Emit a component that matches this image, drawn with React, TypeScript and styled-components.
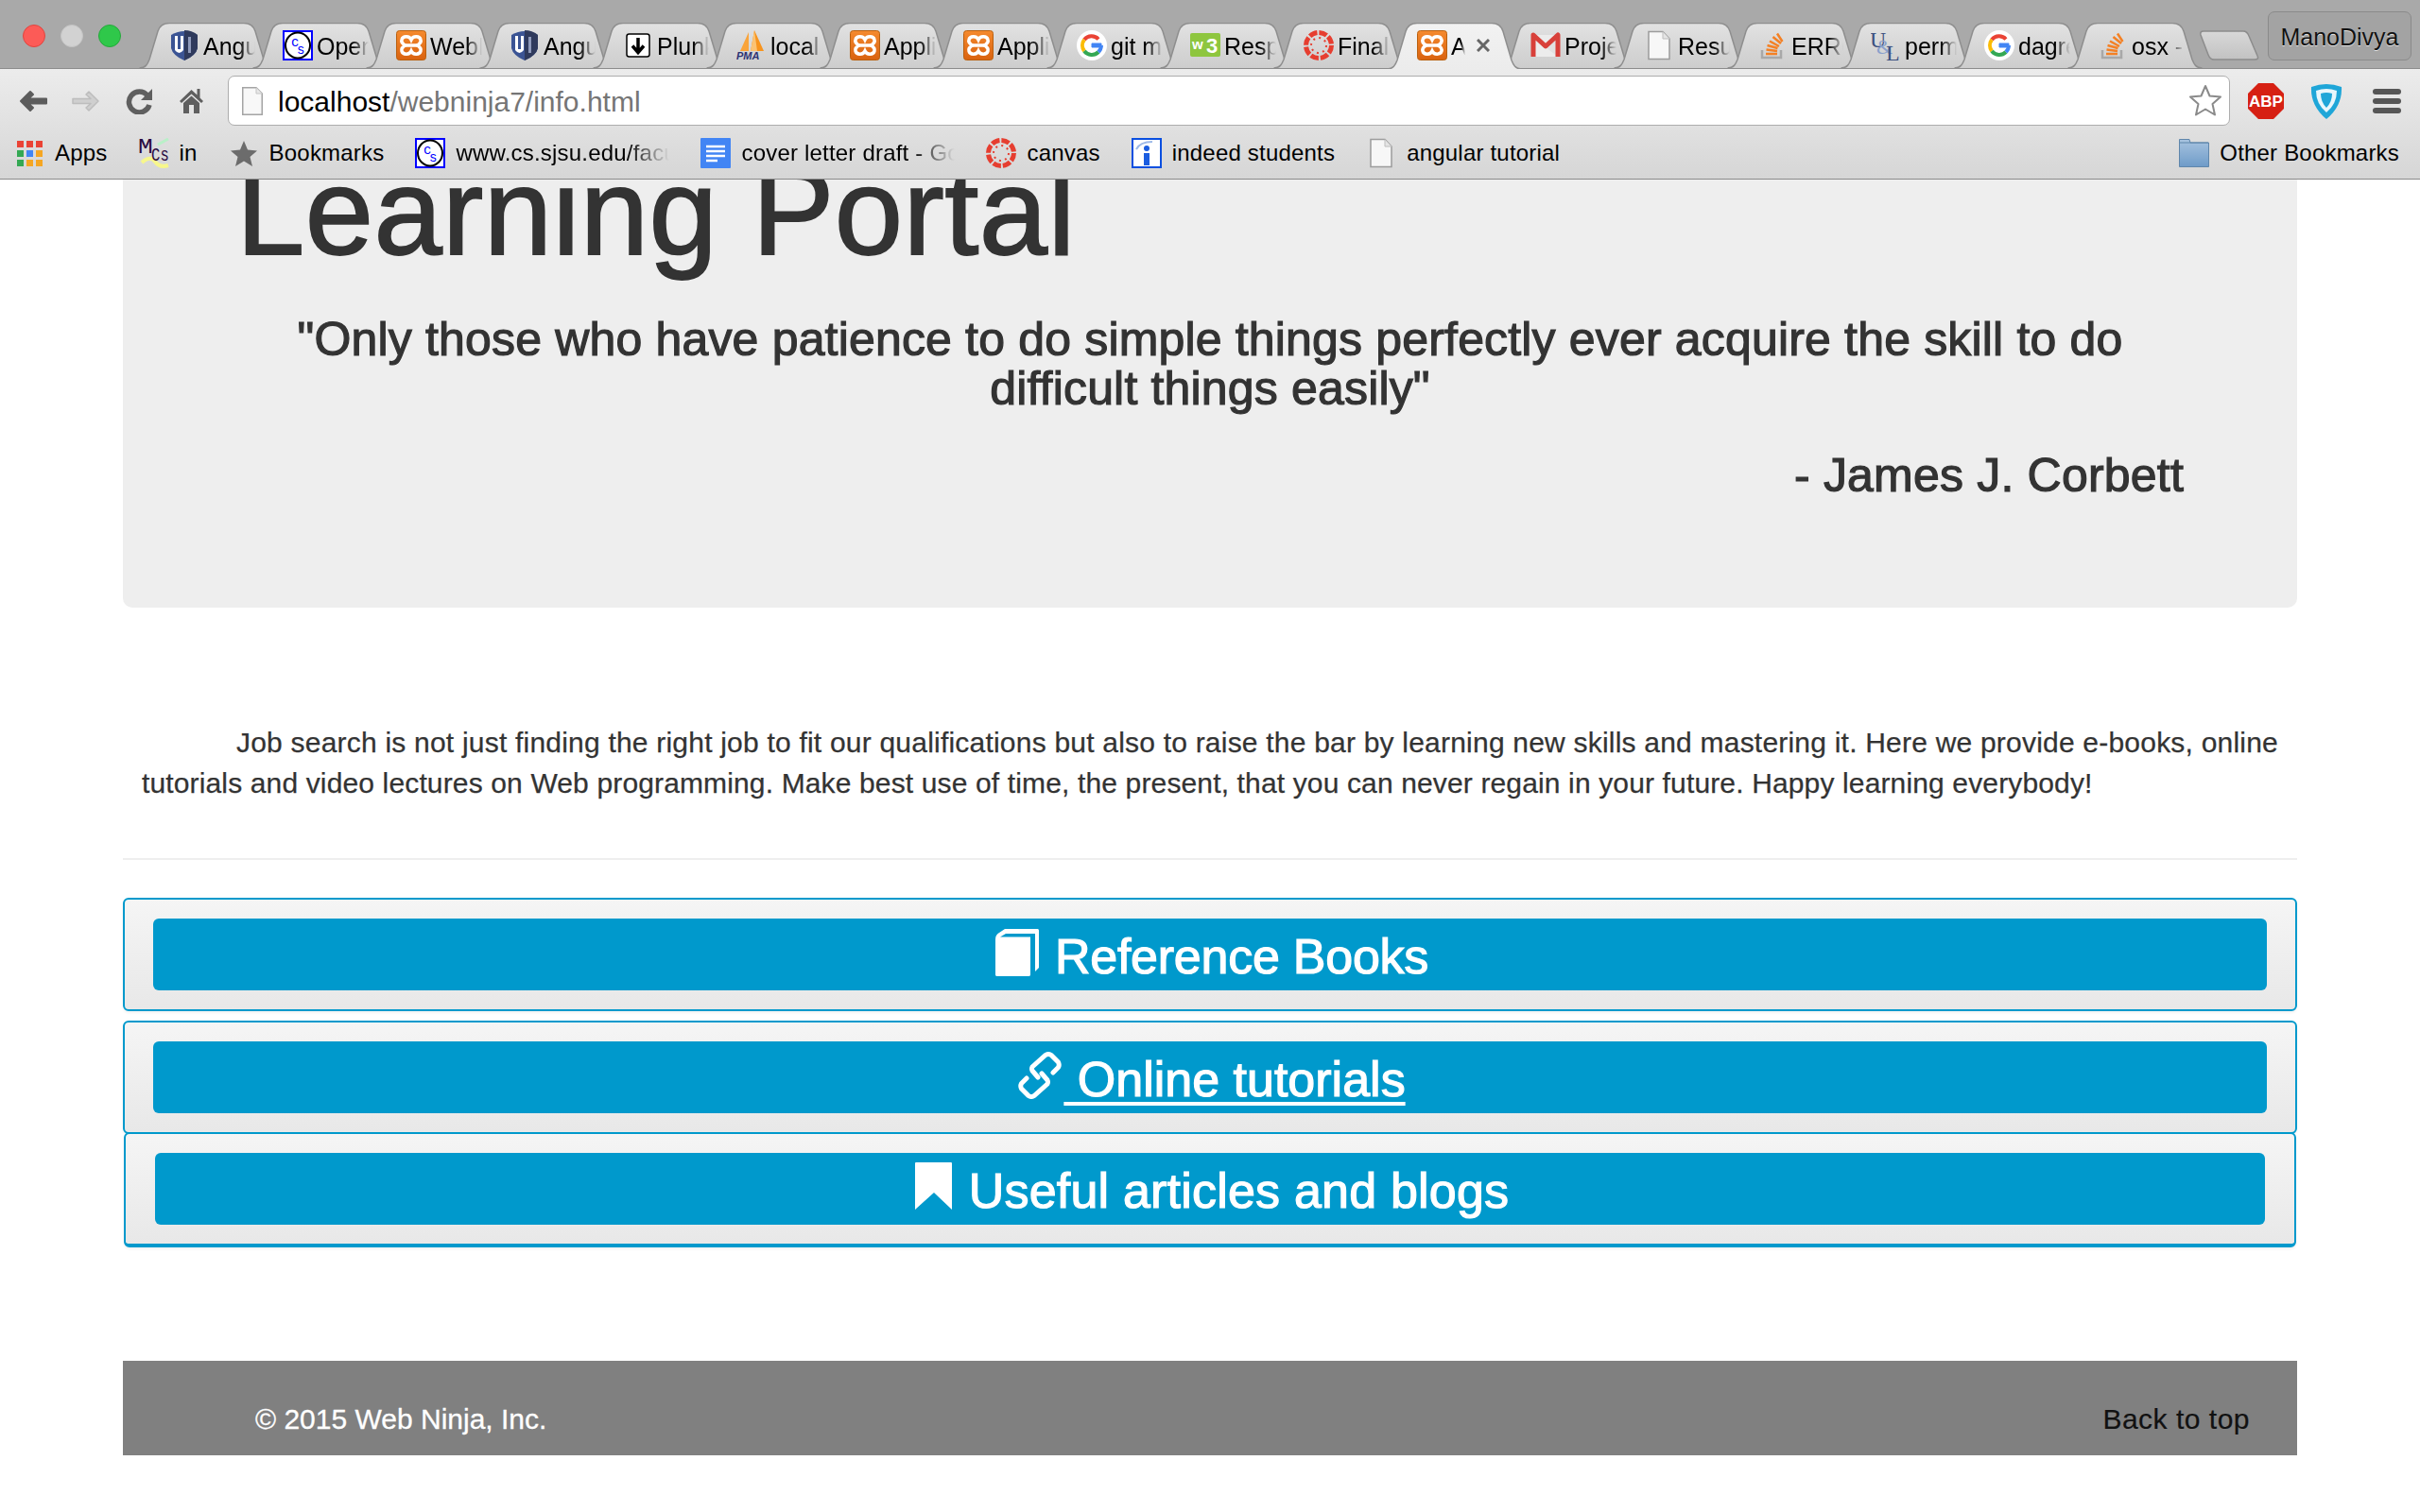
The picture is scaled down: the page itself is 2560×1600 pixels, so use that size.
import React from 'react'
import styled, { createGlobalStyle } from 'styled-components'

const GlobalStyle = createGlobalStyle`
  html, body {
    margin: 0;
    padding: 0;
    background: #fff;
    font-family: "Liberation Sans", Arial, sans-serif;
    color: #333;
  }
`

const Window = styled.div`
  width: 2560px;
  height: 1600px;
  overflow: hidden;
  background: #fff;
`

/* browser chrome */
const TabStrip = styled.div`
  box-sizing: border-box;
  height: 73px;
  padding: 12px 9px 0 24px;
  display: flex;
  align-items: flex-start;
  background: #a9a9a9;
  border-bottom: 1px solid #8c8c8c;
`

const Lights = styled.div`
  display: flex;
  gap: 16px;
  margin: 14px 19px 0 0;
`

const Light = styled.span<{ $color: string; $edge: string }>`
  box-sizing: border-box;
  width: 24px;
  height: 24px;
  border-radius: 50%;
  background: ${({ $color }) => $color};
  border: 1px solid ${({ $edge }) => $edge};
`

const Tabs = styled.div`
  display: flex;
  margin-top: 12px;
`

const TabItem = styled.div<{ $active?: boolean }>`
  position: relative;
  z-index: ${({ $active }) => ($active ? 2 : 1)};
  box-sizing: border-box;
  width: 143px;
  height: ${({ $active }) => ($active ? 49 : 48)}px;
  padding: 0 0 ${({ $active }) => ($active ? 1 : 0)}px 32px;
  display: flex;
  align-items: center;
  gap: 4px;
  & + & {
    margin-left: -23px;
  }
`

const TabShape = styled.svg`
  position: absolute;
  left: 0;
  top: 0;
  width: 100%;
  height: 100%;
`

const TabTitle = styled.span<{ $w?: number }>`
  position: relative;
  width: ${({ $w }) => $w || 55}px;
  padding-top: 2px;
  overflow: hidden;
  white-space: nowrap;
  font-size: 25px;
  line-height: 32px;
  color: #000;
  -webkit-mask-image: linear-gradient(to right, #000 70%, transparent 100%);
  mask-image: linear-gradient(to right, #000 70%, transparent 100%);
`

const TabClose = styled.svg`
  position: relative;
  width: 14px;
  height: 14px;
  margin-left: 8px;
  flex: none;
`

const NewTab = styled.svg`
  width: 63px;
  height: 32px;
  margin: 20px 0 0 -3px;
  flex: none;
`

const ProfileButton = styled.div`
  box-sizing: border-box;
  margin-left: auto;
  width: 152px;
  height: 52px;
  padding-top: 2px;
  border: 1px solid #8a8a8a;
  border-radius: 7px;
  background: #a3a3a3;
  display: flex;
  align-items: center;
  justify-content: center;
  font-size: 25px;
  color: #111;
  text-shadow: 0 1px 0 rgba(255, 255, 255, 0.7);
`

const ChromeBody = styled.div`
  box-sizing: border-box;
  height: 117px;
  background: linear-gradient(#ececec, #d6d6d6);
  border-bottom: 1px solid #8a8a8a;
`

const Toolbar = styled.div`
  box-sizing: border-box;
  height: 60px;
  padding: 7px 20px 0;
  display: flex;
  align-items: center;
`

const ToolIcon = styled.svg<{ $gap: number }>`
  flex: none;
  margin-right: ${({ $gap }) => $gap}px;
`

const AddressBar = styled.div`
  box-sizing: border-box;
  flex: 1;
  height: 53px;
  margin-right: 19px;
  padding: 0 7px 0 14px;
  display: flex;
  align-items: center;
  background: #fff;
  border: 1px solid #adadad;
  border-radius: 7px;
`

const Url = styled.span`
  margin-left: 16px;
  padding-top: 2px;
  font-size: 30px;
  color: #000;
  em {
    font-style: normal;
    color: #757575;
  }
`

const StarOutline = styled.svg`
  margin-left: auto;
  flex: none;
`

const BookmarkBar = styled.div`
  box-sizing: border-box;
  height: 56px;
  padding: 1px 22px 0 18px;
  display: flex;
  align-items: center;
  gap: 33px;
`

const BookmarkItem = styled.div<{ $right?: boolean }>`
  display: flex;
  align-items: center;
  gap: 11px;
  font-size: 24px;
  letter-spacing: 0.2px;
  color: #000;
  white-space: nowrap;
  margin-left: ${({ $right }) => ($right ? 'auto' : 0)};
`

const FadedLabel = styled.span<{ $w: number }>`
  width: ${({ $w }) => $w}px;
  overflow: hidden;
  -webkit-mask-image: linear-gradient(to right, #000 80%, transparent 100%);
  mask-image: linear-gradient(to right, #000 80%, transparent 100%);
`

const Fav = styled.svg`
  width: 32px;
  height: 32px;
  flex: none;
  position: relative;
`

const GridIcon = styled.svg`
  width: 29px;
  height: 32px;
  flex: none;
`

/* page */
const Page = styled.main`
  height: 1410px;
  overflow: hidden;
  padding: 0 130px;
`

const Jumbotron = styled.section`
  box-sizing: border-box;
  height: 453px;
  overflow: hidden;
  padding: 0 120px;
  background: #eee;
  border-radius: 0 0 10px 10px;
`

const Title = styled.h1`
  margin: -30px 0 45px 0;
  font-size: 130px;
  line-height: 128px;
  font-weight: 400;
  letter-spacing: 0.4px;
  color: #333;
  -webkit-text-stroke: 1.8px #333;
  white-space: nowrap;
`

const Quote = styled.h2`
  margin: 0 -60px;
  text-align: center;
  font-size: 50px;
  line-height: 52px;
  font-weight: 400;
  letter-spacing: 0.17px;
  color: #333;
  -webkit-text-stroke: 1.2px #333;
  white-space: nowrap;
`

const Author = styled.h2`
  margin: 40px 0 0;
  text-align: right;
  font-size: 50px;
  line-height: 52px;
  font-weight: 400;
  letter-spacing: 0.2px;
  color: #333;
  -webkit-text-stroke: 1.2px #333;
`

const Intro = styled.p`
  margin: 121px 0 0;
  padding-left: 20px;
  font-size: 30px;
  line-height: 43px;
  letter-spacing: 0.21px;
  color: #333;
  -webkit-text-stroke: 0.25px #333;
  white-space: nowrap;
`

const IntroTail = styled.span`
  letter-spacing: 0.14px;
`

const Indent = styled.span`
  display: inline-block;
  width: 100px;
`

const Rule = styled.hr`
  margin: 58px 0 40px;
  border: 0;
  border-top: 2px solid #eee;
`

const Panel = styled.div`
  box-sizing: border-box;
  height: 120px;
  padding: 20px 30px;
  background: linear-gradient(#f5f5f5, #e8e8e8);
  border: 2px solid #0099cc;
  border-radius: 6px;
  box-shadow: 0 2px 3px rgba(0, 0, 0, 0.05);
  & + & {
    margin-top: 10px;
  }
`

const TopPanel = styled(Panel)`
  position: relative;
  height: 122px;
  margin: -2px 1px 0 !important;
  padding: 20px 31px 22px;
  border-bottom-width: 4px;
`

const PanelButton = styled.a<{ $track?: number }>`
  box-sizing: border-box;
  height: 76px;
  padding: 4px 0 0 4px;
  display: flex;
  align-items: center;
  justify-content: center;
  background: #0099cc;
  border-radius: 6px;
  color: #fff;
  font-size: 52px;
  letter-spacing: ${({ $track }) => $track || 0}px;
  text-decoration: none;
  -webkit-text-stroke: 1.2px #fff;
  white-space: pre;
`

const PanelIcon = styled.svg<{ $gap: number; $lift?: number }>`
  flex: none;
  margin-right: ${({ $gap }) => $gap}px;
  margin-top: -${({ $lift }) => $lift || 0}px;
`

const UnderlinedLabel = styled.span`
  text-decoration: underline;
  text-decoration-thickness: 4px;
  text-underline-offset: 6px;
  margin-left: 2px;
`

const Footer = styled.footer`
  box-sizing: border-box;
  height: 100px;
  margin-top: 120px;
  padding: 24px 50px 0 140px;
  display: flex;
  align-items: center;
  justify-content: space-between;
  background: #808080;
  font-size: 30px;
  color: #fff;
  -webkit-text-stroke: 0.3px #fff;
`

const BackToTop = styled.a`
  color: #111;
  letter-spacing: 0.5px;
  -webkit-text-stroke: 0.2px #111;
  text-decoration: none;
`

/* favicons, drawn at 32 x 32 */
const Doc = () => (
  <Fav viewBox="0 0 32 32">
    <path d="M5 1.5H20L27 9V30.5H5Z" fill="#f7f7f7" stroke="#9c9c9c" strokeWidth="1.5" />
    <path d="M20 1.5V9H27" fill="#e4e4e4" stroke="#bdbdbd" strokeWidth="1" />
  </Fav>
)

const AngularShield = () => (
  <Fav viewBox="0 0 32 32">
    <path d="M2 5 Q16 -3 30 5 V19 Q28 27 16 32 Q4 27 2 19Z" fill="#3b5494" />
    <path d="M16 0 Q24 0 30 5 V19 Q28 27 16 32Z" fill="#2f3a5c" />
    <path d="M6 6H15V21Q10.500 27 6 21Z" fill="#fff" />
    <path d="M9 6H12V20H9Z" fill="#3b5494" />
    <path d="M20 7H23V24H20Z" fill="#8f9abb" />
  </Fav>
)

const CsBox = () => (
  <Fav viewBox="0 0 32 32">
    <rect x="1" y="1" width="30" height="30" fill="#fff" stroke="#0000ff" strokeWidth="2" />
    <ellipse cx="16" cy="16" rx="13" ry="13.500" fill="none" stroke="#000" strokeWidth="2" />
    <text x="9" y="17" fontSize="14" fill="#0000ff" fontFamily="Liberation Mono">c</text>
    <text x="15" y="25" fontSize="14" fill="#0000ff" fontFamily="Liberation Mono">s</text>
  </Fav>
)

const Xampp = () => (
  <Fav viewBox="0 0 32 32">
    <defs>
      <linearGradient id="xamppFill" x1="0" y1="0" x2="0" y2="1">
        <stop offset="0" stopColor="#f58a2e" />
        <stop offset="1" stopColor="#d9620f" />
      </linearGradient>
    </defs>
    <rect x="0.500" y="0.500" width="31" height="31" rx="3" fill="url(#xamppFill)" stroke="#b9600f" />
    <path
      d="M16 10C14 5.500 7 6 6 10C5 13 8 15 9.500 16C8 17 5 19 6 22C7 26 14 26.500 16 22C18 26.500 25 26 26 22C27 19 24 17 22.500 16C24 15 27 13 26 10C25 6 18 5.500 16 10Z"
      fill="none"
      stroke="#fff"
      strokeWidth="3.500"
    />
    <path d="M10 16H22" stroke="#fff" strokeWidth="3.500" />
  </Fav>
)

const Plunker = () => (
  <Fav viewBox="0 0 32 32">
    <rect x="4" y="4" width="24" height="24" rx="2.500" fill="#fff" stroke="#000" strokeWidth="1.500" />
    <path d="M16 8V23M10 16.500L16 23.500L22 16.500" fill="none" stroke="#000" strokeWidth="3.500" />
  </Fav>
)

const Pma = () => (
  <Fav viewBox="0 0 32 32">
    <path d="M4 22L13 2V22Z" fill="#f9a43a" />
    <path d="M15 22L19 0L29 22Z" fill="#f7941e" />
    <path d="M19 0L22 22H15Z" fill="#fbc374" />
    <text x="0" y="31" fontSize="11" fontWeight="700" fontStyle="italic" fill="#2c3273" fontFamily="Liberation Sans">PMA</text>
  </Fav>
)

const GoogleG = () => (
  <Fav viewBox="0 0 32 32">
    <circle cx="16" cy="16" r="16" fill="#fff" />
    <path d="M23 9.500A10 10 0 0 0 8 10" fill="none" stroke="#ea4335" strokeWidth="4" />
    <path d="M8 10A10 10 0 0 0 8 22" fill="none" stroke="#fbbc05" strokeWidth="4" />
    <path d="M8 22A10 10 0 0 0 23 23" fill="none" stroke="#34a853" strokeWidth="4" />
    <path d="M23 23A10 10 0 0 0 26 14H16V18H26" fill="#4285f4" stroke="#4285f4" strokeWidth="1" />
    <path d="M23 23A10 10 0 0 0 26 16" fill="none" stroke="#4285f4" strokeWidth="4" />
  </Fav>
)

const W3 = () => (
  <Fav viewBox="0 0 32 32">
    <rect y="3" width="32" height="25" rx="2" fill="#8ec63f" />
    <text x="2" y="20" fontSize="15" fontWeight="700" fill="#fff" fontFamily="Liberation Sans">w</text>
    <text x="17" y="24" fontSize="22" fontWeight="700" fill="#fff" fontFamily="Liberation Sans">3</text>
  </Fav>
)

const Canvas = () => (
  <Fav viewBox="0 0 32 32">
    <circle cx="16" cy="16" r="13.500" fill="none" stroke="#e63e30" strokeWidth="5" strokeDasharray="8.600 2" />
    <circle cx="16" cy="16" r="8" fill="none" stroke="#e63e30" strokeWidth="2" strokeDasharray="2 4.280" />
  </Fav>
)

const Gmail = () => (
  <Fav viewBox="0 0 32 32">
    <path d="M3 5H29V28H3Z" fill="#ececec" />
    <path d="M3 8L16 19L29 8V28" fill="#dadada" opacity="0.6" />
    <path d="M3 28V5L16 17L29 5V28" fill="none" stroke="#d8403a" strokeWidth="5" strokeLinejoin="round" />
  </Fav>
)

const StackOverflow = () => (
  <Fav viewBox="0 0 32 32">
    <path d="M5 21V29H25V21" fill="none" stroke="#a8a8a8" strokeWidth="2.500" />
    <path d="M9 25H21M9.500 20.500L21 22M10.500 16L21.500 19M13 11.500L23 17M16.500 7L25 14M21 3.500L26.500 12" fill="none" stroke="#f48024" strokeWidth="2.500" />
  </Fav>
)

const UandL = () => (
  <Fav viewBox="0 0 32 32">
    <text x="-1" y="18" fontSize="24" fill="#3d5180" fontFamily="Liberation Serif">U</text>
    <text x="6" y="25" fontSize="22" fill="#8aa0cc" fontFamily="Liberation Serif">&amp;</text>
    <text x="16" y="32" fontSize="24" fill="#3d5180" fontFamily="Liberation Serif">L</text>
  </Fav>
)

const AppsGrid = () => (
  <GridIcon viewBox="0 0 29 32">
    {['#ea4335', '#ea4335', '#ea4335', '#34a853', '#4285f4', '#f5a623', '#34a853', '#f5a623', '#f5a623'].map((c, i) => (
      <rect key={i} x={(i % 3) * 10} y={3 + Math.floor(i / 3) * 10} width="7" height="7" fill={c} />
    ))}
  </GridIcon>
)

const McsLogo = () => (
  <Fav viewBox="0 0 32 32">
    <path d="M3 26Q12 18 17 25T31 29" fill="none" stroke="#f7f78c" strokeWidth="4" />
    <path d="M20 7L31 1" stroke="#b9f0c8" strokeWidth="3" />
    <text x="-1" y="16" fontSize="22" fill="#2a0a40" fontFamily="Liberation Mono" textLength="16" lengthAdjust="spacingAndGlyphs">M</text>
    <text x="13" y="24" fontSize="20" fill="#2a0a40" fontFamily="Liberation Mono" textLength="19" lengthAdjust="spacingAndGlyphs">Cs</text>
  </Fav>
)

const GrayStar = () => (
  <Fav viewBox="0 0 32 32">
    <path d="M16 3L20 12.500L30 13.500L22.500 20L25 30L16 24.500L7 30L9.500 20L2 13.500L12 12.500Z" fill="#6c6c6c" />
  </Fav>
)

const GoogleDoc = () => (
  <Fav viewBox="0 0 32 32">
    <rect width="32" height="32" rx="1" fill="#4285f4" />
    <path d="M6 9H26M6 14H26M6 19H26M6 24H18" stroke="#fff" strokeWidth="2.500" />
  </Fav>
)

const Indeed = () => (
  <Fav viewBox="0 0 32 32">
    <rect x="1" y="1" width="30" height="30" fill="#fff" stroke="#0a4fe0" strokeWidth="2" />
    <path d="M5 12Q9 4 22 4" fill="none" stroke="#9db9e8" strokeWidth="2" />
    <circle cx="16" cy="11" r="3" fill="#1b5de0" />
    <rect x="13" y="16" width="6" height="13" fill="#1b5de0" />
  </Fav>
)

const Folder = () => (
  <Fav viewBox="0 0 32 32">
    <defs>
      <linearGradient id="folderFill" x1="0" y1="0" x2="0" y2="1">
        <stop offset="0" stopColor="#a8c4e0" />
        <stop offset="1" stopColor="#6e9bc8" />
      </linearGradient>
    </defs>
    <path d="M0.500 30.500V1.500H11L12 5H31.500V30.500Z" fill="url(#folderFill)" stroke="#5f86ab" />
    <path d="M1 5H31" stroke="#5f86ab" />
  </Fav>
)

const tabs: { icon: React.ReactNode; title: string; active?: boolean }[] = [
  { icon: <AngularShield />, title: 'Angu' },
  { icon: <CsBox />, title: 'Open' },
  { icon: <Xampp />, title: 'WebN' },
  { icon: <AngularShield />, title: 'Angu' },
  { icon: <Plunker />, title: 'Plunk' },
  { icon: <Pma />, title: 'local' },
  { icon: <Xampp />, title: 'Appli' },
  { icon: <Xampp />, title: 'Appli' },
  { icon: <GoogleG />, title: 'git m' },
  { icon: <W3 />, title: 'Resp' },
  { icon: <Canvas />, title: 'Final' },
  { icon: <Xampp />, title: 'Ap', active: true },
  { icon: <Gmail />, title: 'Proje' },
  { icon: <Doc />, title: 'Resu' },
  { icon: <StackOverflow />, title: 'ERRO' },
  { icon: <UandL />, title: 'perm' },
  { icon: <GoogleG />, title: 'dagre' },
  { icon: <StackOverflow />, title: 'osx -' },
]

const TAB_PATH = 'M0.5 48C7 48 9 44 11 39L20 9C22 3 26 .5 32 .5H111C117 .5 121 3 123 9L132 39C134 44 136 48 142.5 48'

const Tab = ({ icon, title, active }: { icon: React.ReactNode; title: string; active?: boolean }) => (
  <TabItem $active={active}>
    <TabShape viewBox="0 0 143 48" preserveAspectRatio="none">
      <defs>
        <linearGradient id={active ? 'tabOn' : 'tabOff'} x1="0" y1="0" x2="0" y2="1">
          <stop offset="0" stopColor={active ? '#f2f2f2' : '#e2e2e2'} />
          <stop offset="1" stopColor={active ? '#ececec' : '#cdcdcd'} />
        </linearGradient>
      </defs>
      <path d={TAB_PATH} fill={`url(#${active ? 'tabOn' : 'tabOff'})`} stroke="#8e8e8e" strokeWidth="1.5" />
    </TabShape>
    {icon}
    <TabTitle $w={active ? 15 : 55}>{title}</TabTitle>
    {active && (
      <TabClose viewBox="0 0 14 14">
        <path d="M1 1L13 13M13 1L1 13" stroke="#666" strokeWidth="3" />
      </TabClose>
    )}
  </TabItem>
)

export default function App() {
  return (
    <Window>
      <GlobalStyle />
      <TabStrip>
        <Lights>
          <Light $color="#fc5b57" $edge="#e0443e" />
          <Light $color="#d2d2d2" $edge="#c4c4c4" />
          <Light $color="#2fc84a" $edge="#25a83b" />
        </Lights>
        <Tabs>
          {tabs.map((t, i) => (
            <Tab key={i} icon={t.icon} title={t.title} active={t.active} />
          ))}
        </Tabs>
        <NewTab viewBox="0 0 63 32">
          <defs>
            <linearGradient id="newTabFill" x1="0" y1="0" x2="0" y2="1">
              <stop offset="0" stopColor="#d8d8d8" />
              <stop offset="1" stopColor="#c2c2c2" />
            </linearGradient>
          </defs>
          <path d="M4 1H46Q50 1 52 6L61 27Q63 31 58 31H15Q11 31 9 26L1 5Q0 1 4 1Z" fill="url(#newTabFill)" stroke="#8c8c8c" strokeWidth="1.500" />
        </NewTab>
        <ProfileButton>ManoDivya</ProfileButton>
      </TabStrip>

      <ChromeBody>
        <Toolbar>
          <ToolIcon $gap={24} width="31" height="24" viewBox="0 0 31 24">
            <path d="M12 2L2 12L12 22L15 19L10 14.500H29V9.500H10L15 5Z" fill="#5c5c5c" stroke="#5c5c5c" strokeWidth="2" strokeLinejoin="round" />
          </ToolIcon>
          <ToolIcon $gap={26} width="31" height="24" viewBox="0 0 31 24">
            <path d="M19 2L29 12L19 22L16 19L21 14.500H2V9.500H21L16 5Z" fill="#cfcfcf" stroke="#bdbdbd" strokeWidth="1.500" strokeLinejoin="round" />
          </ToolIcon>
          <ToolIcon $gap={28} width="30" height="28" viewBox="0 0 30 28">
            <path d="M24 8A11 11 0 1 0 26 18" fill="none" stroke="#5f5f5f" strokeWidth="5.500" />
            <path d="M29 1V13H17Z" fill="#5f5f5f" />
          </ToolIcon>
          <ToolIcon $gap={26} width="25" height="27" viewBox="0 0 25 27">
            <path d="M12.500 2L0 14L2 16L12.500 6.500L23 16L25 14L21.500 10.500V1H18.500V7.500Z" fill="#5f5f5f" />
            <path d="M4 16L12.500 8.500L21 16V27H15V18H10V27H4Z" fill="#5f5f5f" />
          </ToolIcon>
          <AddressBar>
            <svg width="22" height="30" viewBox="0 0 22 30">
              <path d="M.75.75H15L21.250 7V29.250H.75Z" fill="#f8f8f8" stroke="#a4a4a4" strokeWidth="1.500" />
              <path d="M15 .75V7H21.250" fill="#e8e8e8" stroke="#c4c4c4" />
            </svg>
            <Url>
              localhost<em>/webninja7/info.html</em>
            </Url>
            <StarOutline width="36" height="35" viewBox="0 0 36 35">
              <path d="M18 2L22.500 12.500L34 13.500L25.500 21L28 32.500L18 26.500L8 32.500L10.500 21L2 13.500L13.500 12.500Z" fill="#fff" stroke="#8a8a8a" strokeWidth="2" strokeLinejoin="round" />
            </StarOutline>
          </AddressBar>
          <ToolIcon $gap={28} width="38" height="38" viewBox="0 0 38 38">
            <path d="M11 0H27L38 11V27L27 38H11L0 27V11Z" fill="#d62013" />
            <text x="19" y="25" textAnchor="middle" fontSize="17" fontWeight="700" fill="#fff" fontFamily="Liberation Sans">ABP</text>
          </ToolIcon>
          <ToolIcon $gap={32} width="34" height="38" viewBox="0 0 34 38">
            <path d="M1 4Q17 -2 33 4Q34 24 17 38Q0 24 1 4Z" fill="#1fa6d8" />
            <path d="M6 8Q17 4 28 8Q28 22 17 31Q6 22 6 8Z" fill="#e8f6fb" />
            <path d="M11 11Q17 9 23 11Q23 20 17 26Q11 20 11 11Z" fill="#1fa6d8" />
          </ToolIcon>
          <svg width="30" height="26" viewBox="0 0 30 26">
            <rect width="30" height="6" rx="3" fill="#565656" />
            <rect y="10" width="30" height="6" rx="3" fill="#565656" />
            <rect y="20" width="30" height="6" rx="3" fill="#565656" />
          </svg>
        </Toolbar>

        <BookmarkBar>
          <BookmarkItem><AppsGrid />Apps</BookmarkItem>
          <BookmarkItem><McsLogo />in</BookmarkItem>
          <BookmarkItem><GrayStar />Bookmarks</BookmarkItem>
          <BookmarkItem><CsBox /><FadedLabel $w={226}>www.cs.sjsu.edu/faculty</FadedLabel></BookmarkItem>
          <BookmarkItem><GoogleDoc /><FadedLabel $w={226}>cover letter draft - Google</FadedLabel></BookmarkItem>
          <BookmarkItem><Canvas />canvas</BookmarkItem>
          <BookmarkItem><Indeed />indeed students</BookmarkItem>
          <BookmarkItem><Doc />angular tutorial</BookmarkItem>
          <BookmarkItem $right><Folder />Other Bookmarks</BookmarkItem>
        </BookmarkBar>
      </ChromeBody>

      <Page>
        <Jumbotron>
          <Title>Learning Portal</Title>
          <Quote>
            "Only those who have patience to do simple things perfectly ever acquire the skill to do
            <br />
            difficult things easily"
          </Quote>
          <Author>- James J. Corbett</Author>
        </Jumbotron>

        <Intro>
          <Indent />
          Job search is not just finding the right job to fit our qualifications but also to raise the bar by learning new skills and mastering it. Here we provide e-books, online
          <br />
          <IntroTail>tutorials and video lectures on Web programming. Make best use of time, the present, that you can never regain in your future. Happy learning everybody!</IntroTail>
        </Intro>

        <Rule />

        <Panel>
          <PanelButton $track={-0.25}>
            <PanelIcon $gap={17} $lift={8} width="46" height="50" viewBox="0 0 46 50">
              <path
                d="M0 11C0 7 2 5 4 4L10 0H44C45.500 0 46 .5 46 2V41L42 45V5H11L5 8.500H37V48C37 49.500 36.500 50 35 50H2C.5 50 0 49.500 0 48Z"
                fill="#fff"
              />
            </PanelIcon>
            Reference Books
          </PanelButton>
        </Panel>
        <Panel>
          <PanelButton>
            <PanelIcon $gap={0} $lift={8} width="46" height="50" viewBox="0 0 46 50">
              <path
                d="M21 27L15 20Q14 18 15 16L29 3.500Q32 1.500 35 3.500L42.500 11Q44 14 42.500 16.500L37 22M25 23L31 30Q32 32 31 34L17 46.500Q14 48.500 11 46.500L3.500 39Q2 36 3.500 33.500L9 28"
                fill="none"
                stroke="#fff"
                strokeWidth="5"
                strokeLinecap="round"
              />
            </PanelIcon>
            <UnderlinedLabel> Online tutorials</UnderlinedLabel>
          </PanelButton>
        </Panel>
        <TopPanel>
          <PanelButton $track={0.2}>
            <PanelIcon $gap={18} $lift={10} width="39" height="50" viewBox="0 0 39 50">
              <path d="M1 0H38Q39 0 39 1V50L20 32L0 50V1Q0 0 1 0Z" fill="#fff" />
            </PanelIcon>
            Useful articles and blogs
          </PanelButton>
        </TopPanel>

        <Footer>
          <span>© 2015 Web Ninja, Inc.</span>
          <BackToTop>Back to top</BackToTop>
        </Footer>
      </Page>
    </Window>
  )
}
